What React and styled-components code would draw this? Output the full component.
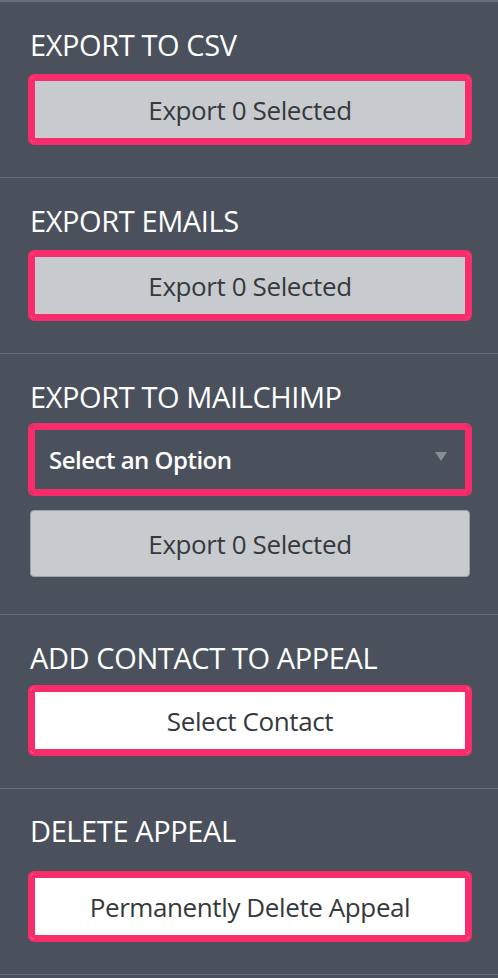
import React from "react";
import styled, { createGlobalStyle } from "styled-components";

const GlobalStyle = createGlobalStyle`
  html, body {
    margin: 0;
    padding: 0;
    background: #4a515c;
  }
  body {
    font-family: "Open Sans", "Liberation Sans", sans-serif;
  }
`;

const PINK = "#f72d6b";
const LINE = "#66707d";

const Panel = styled.div`
  width: 498px;
  min-height: 978px;
  background: #4a515c;
  border-top: 2px solid ${LINE};
  box-sizing: border-box;
`;

const Section = styled.section`
  display: flex;
  flex-direction: column;
  gap: ${(p) => p.gap || 0}px;
  padding: ${(p) => p.top || 25}px 28px ${(p) => p.bottom || 34}px 30px;
  border-bottom: 1px solid ${LINE};
`;

const Heading = styled.h3`
  margin: 0 0 ${(p) => (p.space !== undefined ? p.space : 13)}px 0;
  color: #ffffff;
  font-size: 29px;
  font-weight: 400;
  line-height: 36px;
  letter-spacing: -0.4px;
  text-transform: uppercase;
  white-space: nowrap;
`;

const Button = styled.button`
  display: flex;
  align-items: center;
  justify-content: center;
  width: 440px;
  height: 67px;
  box-sizing: border-box;
  padding: 0;
  border: 1px solid ${(p) => (p.focused ? PINK : "#9ea2a8")};
  border-radius: 4px;
  background: ${(p) => (p.light ? "#ffffff" : "#c8cbce")};
  color: #36393c;
  font-family: "Open Sans", "Liberation Sans", sans-serif;
  font-size: 26px;
  letter-spacing: -0.4px;
  box-shadow: ${(p) =>
    p.focused ? `0 0 0 2px ${PINK}, inset 0 0 0 4px ${PINK}` : "none"};
  cursor: pointer;
`;

const Select = styled.div`
  display: flex;
  align-items: center;
  justify-content: space-between;
  width: 440px;
  height: 69px;
  box-sizing: border-box;
  padding: 0 22px 0 18px;
  border: 1px solid ${PINK};
  border-radius: 4px;
  box-shadow: 0 0 0 2px ${PINK}, inset 0 0 0 4px ${PINK};
  color: #ffffff;
  font-size: 24px;
  font-weight: 600;
  letter-spacing: -0.5px;
`;

const Caret = styled.span`
  width: 0;
  height: 0;
  border-left: 6px solid transparent;
  border-right: 6px solid transparent;
  border-top: 9px solid #8a8f96;
  margin-top: -6px;
`;

export default function App() {
  return (
    <>
      <GlobalStyle />
      <Panel>
        <Section>
          <Heading>Export to CSV</Heading>
          <Button focused>Export 0 Selected</Button>
        </Section>
        <Section>
          <Heading>Export Emails</Heading>
          <Button focused>Export 0 Selected</Button>
        </Section>
        <Section gap={16} bottom={37}>
          <Heading space={-6}>Export to Mailchimp</Heading>
          <Select>
            <span>Select an Option</span>
            <Caret />
          </Select>
          <Button>Export 0 Selected</Button>
        </Section>
        <Section>
          <Heading space={11}>Add Contact to Appeal</Heading>
          <Button focused light>
            Select Contact
          </Button>
        </Section>
        <Section top={24}>
          <Heading space={24}>Delete Appeal</Heading>
          <Button focused light>
            Permanently Delete Appeal
          </Button>
        </Section>
      </Panel>
    </>
  );
}
